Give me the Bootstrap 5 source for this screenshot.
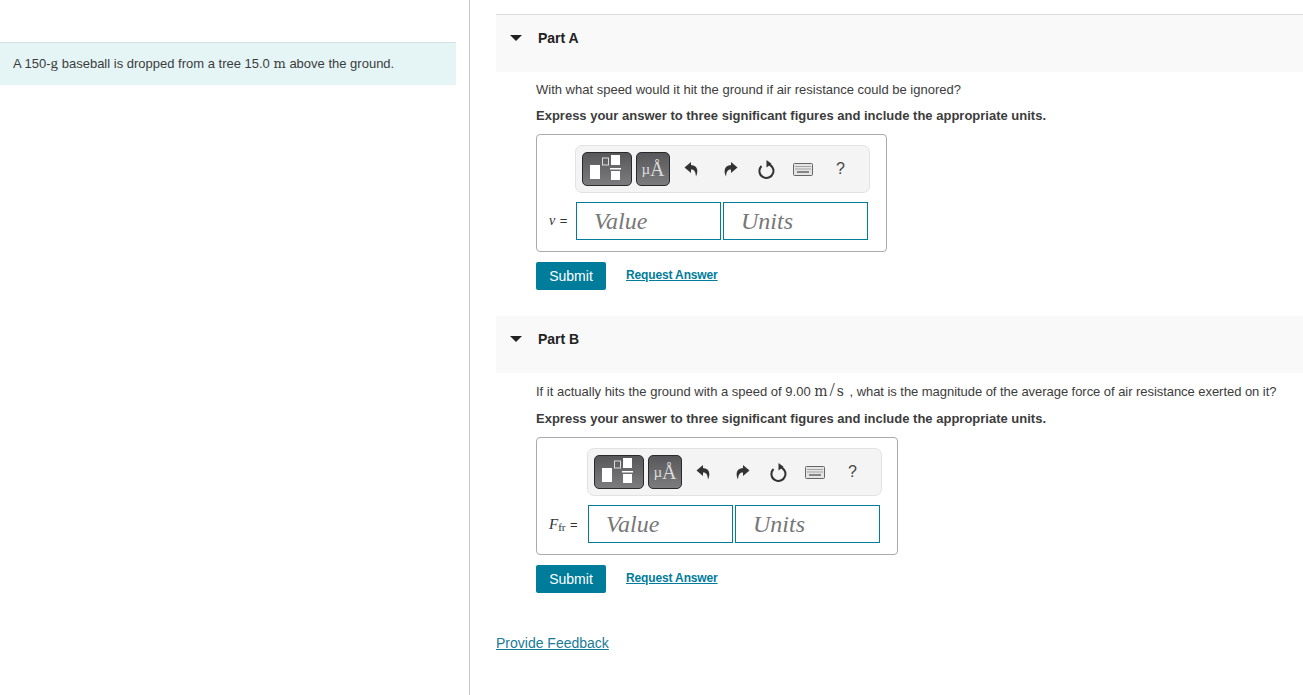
<!DOCTYPE html>
<html lang="en"><head><meta charset="utf-8"><title>Parts</title>
<link href="https://cdn.jsdelivr.net/npm/bootstrap@5.3.0/dist/css/bootstrap.min.css" rel="stylesheet">
<style>
html,body{height:100%;}
body{font-family:"Liberation Sans",Arial,sans-serif;font-size:13px;color:#333;background:#fff;overflow:hidden;line-height:18px;}
.shell{height:695px;}
.leftpane{width:470px;flex:none;border-right:1px solid #c7c7c7;padding:42px 13px 0 0;}
.intro{height:43px;background:#e5f5f6;border-top:1px solid #d9e0e3;padding:12px 0 0 13px;font-size:13px;color:#3c3c3c;white-space:nowrap;}
.m{font-family:"Liberation Serif",serif;font-size:15px;line-height:0;}
.mb2{font-family:"DejaVu Serif",serif;font-size:13px;line-height:0;}
.rightpane{flex:1;min-width:0;padding:14px 0 0 26px;}
.parthead{height:57px;background:#f9f9f9;padding:14px 0 0 14px;font-weight:700;font-size:14px;color:#222;}
.parthead.first{height:58px;border-top:1px solid #dcdcdc;}
.caret{width:0;height:0;border-left:6px solid transparent;border-right:6px solid transparent;border-top:6px solid #222;margin-right:16px;margin-top:6px;}
.partbody{padding-left:40px;}
.q{font-size:13px;color:#3c3c3c;white-space:nowrap;}
.ins{font-size:13px;font-weight:700;color:#3c3c3c;}
.answerbox{border:1px solid #aaa;border-radius:4px;height:118px;padding:10px 10px 0 12px;width:351px;}
.answerbox.wide{width:362px;}
.toolrow{margin-left:26px;width:295px;height:48px;background:#f4f4f4;border:1px solid #e2e2e2;border-radius:7px;padding:6px 0 0 6px;}
.answerbox.wide .toolrow{margin-left:38px;}
.tbtn{height:34px;border:1px solid #2a2a2a;border-radius:5px;background:linear-gradient(#58585a,#7c7c7f);color:#ddd;}
.tbtn.t1{width:50px;margin-right:4px;}
.tbtn.t2{width:34px;font-family:"Liberation Serif",serif;font-size:15px;}
.tbtn.t2 b{font-weight:400;font-size:20px;}
.help{font-size:16px;color:#444;}
.inrow{margin-top:9px;}
.varl{width:27px;flex:none;font-family:"Liberation Serif",serif;font-size:14px;white-space:nowrap;color:#333;}
.answerbox.wide .varl{width:39px;}
.varl i.big{font-size:15px;}
.varl .eq{font-family:"Liberation Sans",sans-serif;font-size:13px;margin-left:1px;}
.vbox{width:145px;height:38px;flex:none;border:1px solid #007d9d;font-family:"Liberation Serif",serif;font-style:italic;font-size:24px;color:#777;padding:0 0 0 17px;line-height:36px;}
.vbox+.vbox{margin-left:2px;}
.btn-sub{width:70px;height:28px;background:#007c9b;color:#fff;border:0;border-radius:2px;font-size:14px;padding:0;}
.btn-sub:hover{background:#007c9b;color:#fff;}
.reqa{font-size:12px;letter-spacing:-.14px;font-weight:700;color:#007c9b;margin-left:20px;margin-top:-2px;}
.fb{font-size:14px;color:#1a7a97;}
sub.fr{font-size:11px;bottom:-.2em;}
.unit{font-size:14px;letter-spacing:2px;}
.unit span{font-family:"Liberation Serif",serif;font-size:19px;line-height:0;}
.tail{letter-spacing:-.05px;}
</style></head><body>
<div class="shell d-flex">
<aside class="leftpane"><div class="intro">A 150-<span class="m">g</span> baseball is dropped from a tree 15.0 <span class="mb2">m</span> above the ground.</div></aside>
<main class="rightpane">

<div class="parthead first d-flex align-items-start"><span class="caret"></span><span>Part A</span></div>
<section class="partbody">
<p class="q mb-0" style="padding-top:9px">With what speed would it hit the ground if air resistance could be ignored?</p>
<p class="ins mb-0 mt-2">Express your answer to three significant figures and include the appropriate units.</p>
<div class="answerbox" style="margin-top:9px">
<div class="toolrow d-flex align-items-start">
<div class="tbtn t1"><svg width="48" height="32" viewBox="0 0 48 32"><rect x="7" y="12" width="10" height="14" fill="#fff"/><rect x="19.500" y="5" width="6" height="7" fill="none" stroke="#ddd"/><rect x="28" y="2" width="9" height="10" fill="#fff"/><rect x="27" y="15" width="11" height="1.500" fill="#fff"/><rect x="28" y="18" width="9" height="9" fill="#fff"/></svg></div>
<div class="tbtn t2 d-flex align-items-center justify-content-center">µ<b>Å</b></div>
<div class="d-flex align-items-center" style="height:34px">
<svg style="margin-left:14px" width="15" height="17" viewBox="0 0 15 17"><path d="M7 1 .5 6.500 7 12V8.500c3 0 4.500 1.500 5 7 2.500-5 2-11-5-11.500z" fill="#333"/></svg>
<svg style="margin-left:24px" width="15" height="17" viewBox="0 0 15 17"><path d="M8 1 14.500 6.500 8 12V8.500c-3 0-4.500 1.500-5 7-2.500-5-2-11 5-11.500z" fill="#333"/></svg>
<svg style="margin-left:20px" width="17" height="19" viewBox="0 0 17 19"><path d="M9 4A7 7 0 1 1 3.500 6" fill="none" stroke="#333" stroke-width="2"/><path d="M8.500 0v7.500l5-3.700z" fill="#333"/></svg>
<svg style="margin-left:18px" width="20" height="13" viewBox="0 0 20 13"><rect x=".5" y=".5" width="19" height="12" rx="1" fill="#e4e4e4" stroke="#666"/><path d="M2.500 3.500h15M2.500 6h15" stroke="#666" stroke-dasharray="1 1"/><path d="M4 9h12" stroke="#666" stroke-width="1.500"/></svg>
<span class="help" style="margin-left:23px">?</span>
</div></div>
<div class="inrow d-flex align-items-center"><span class="varl"><i>v</i> <span class="eq">=</span></span><div class="vbox">Value</div><div class="vbox">Units</div></div>
</div>
<div class="d-flex align-items-center" style="margin-top:10px"><button class="btn btn-sub" type="button">Submit</button><a class="reqa" href="#">Request Answer</a></div>
</section>

<div class="parthead d-flex align-items-start" style="margin-top:26px"><span class="caret"></span><span>Part B</span></div>
<section class="partbody">
<p class="q mb-0" style="padding-top:10px">If it actually hits the ground with a speed of 9.00 <span class="mb2 unit">m<span>/</span>s</span><span class="tail"> , what is the magnitude of the average force of air resistance exerted on it?</span></p>
<p class="ins mb-0" style="margin-top:9px">Express your answer to three significant figures and include the appropriate units.</p>
<div class="answerbox wide" style="margin-top:9px">
<div class="toolrow d-flex align-items-start">
<div class="tbtn t1"><svg width="48" height="32" viewBox="0 0 48 32"><rect x="7" y="12" width="10" height="14" fill="#fff"/><rect x="19.500" y="5" width="6" height="7" fill="none" stroke="#ddd"/><rect x="28" y="2" width="9" height="10" fill="#fff"/><rect x="27" y="15" width="11" height="1.500" fill="#fff"/><rect x="28" y="18" width="9" height="9" fill="#fff"/></svg></div>
<div class="tbtn t2 d-flex align-items-center justify-content-center">µ<b>Å</b></div>
<div class="d-flex align-items-center" style="height:34px">
<svg style="margin-left:14px" width="15" height="17" viewBox="0 0 15 17"><path d="M7 1 .5 6.500 7 12V8.500c3 0 4.500 1.500 5 7 2.500-5 2-11-5-11.500z" fill="#333"/></svg>
<svg style="margin-left:24px" width="15" height="17" viewBox="0 0 15 17"><path d="M8 1 14.500 6.500 8 12V8.500c-3 0-4.500 1.500-5 7-2.500-5-2-11 5-11.500z" fill="#333"/></svg>
<svg style="margin-left:20px" width="17" height="19" viewBox="0 0 17 19"><path d="M9 4A7 7 0 1 1 3.500 6" fill="none" stroke="#333" stroke-width="2"/><path d="M8.500 0v7.500l5-3.700z" fill="#333"/></svg>
<svg style="margin-left:18px" width="20" height="13" viewBox="0 0 20 13"><rect x=".5" y=".5" width="19" height="12" rx="1" fill="#e4e4e4" stroke="#666"/><path d="M2.500 3.500h15M2.500 6h15" stroke="#666" stroke-dasharray="1 1"/><path d="M4 9h12" stroke="#666" stroke-width="1.500"/></svg>
<span class="help" style="margin-left:23px">?</span>
</div></div>
<div class="inrow d-flex align-items-center"><span class="varl"><i class="big">F</i><sub class="fr">fr</sub> <span class="eq">=</span></span><div class="vbox">Value</div><div class="vbox">Units</div></div>
</div>
<div class="d-flex align-items-center" style="margin-top:10px"><button class="btn btn-sub" type="button">Submit</button><a class="reqa" href="#">Request Answer</a></div>
</section>

<div style="margin-top:41px"><a class="fb" href="#">Provide Feedback</a></div>
</main></div>
<script src="https://cdn.jsdelivr.net/npm/bootstrap@5.3.0/dist/js/bootstrap.bundle.min.js"></script>
</body></html>
